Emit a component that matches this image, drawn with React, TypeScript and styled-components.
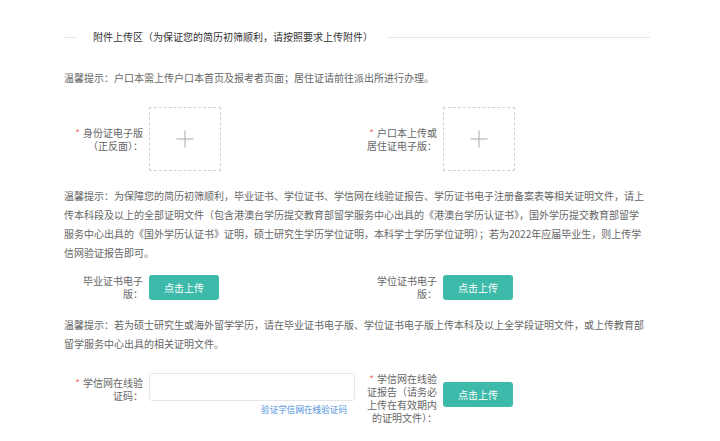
import React from "react";
import styled, { createGlobalStyle } from "styled-components";

const GlobalStyle = createGlobalStyle`
  html, body { margin: 0; padding: 0; background: #fff; }
  body { font-family: "Noto Sans CJK SC", "Noto Sans", sans-serif; }
`;

const Page = styled.div`
  padding: 27px 0 20px 63px;
  width: 587px;
`;

const Header = styled.div`
  display: flex;
  align-items: center;
  height: 20px;
`;

const HeaderLine = styled.div<{ $grow?: boolean }>`
  height: 1px;
  background: #e6e6e6;
  width: ${(p) => (p.$grow ? "auto" : "14px")};
  flex: ${(p) => (p.$grow ? "1" : "none")};
`;

const Title = styled.div`
  margin: 0 14px 0 16px;
  font-size: 10px;
  line-height: 20px;
  color: #333;
  white-space: nowrap;
`;

const Hint = styled.div<{ $mt: number }>`
  margin-top: ${(p) => p.$mt}px;
  padding-left: 1px;
  font-size: 10px;
  line-height: 19px;
  color: #666;
  white-space: nowrap;
`;

const Row = styled.div<{ $mt: number }>`
  display: grid;
  grid-template-columns: 294px 293px;
  margin-top: ${(p) => p.$mt}px;
`;

const Item = styled.div<{ $align?: string }>`
  display: flex;
  align-items: ${(p) => p.$align || "center"};
`;

const Label = styled.div<{ $mt?: number; $required?: boolean }>`
  box-sizing: border-box;
  width: 86px;
  flex: none;
  padding: 0 6px 0 8px;
  margin-top: ${(p) => p.$mt || 0}px;
  text-align: right;
  font-size: 10px;
  line-height: 13px;
  color: #666;

  &::before {
    content: ${(p) => (p.$required ? '"*"' : "none")};
    color: #f36d6d;
    margin-right: 3px;
  }
`;

const UploadBox = styled.div`
  box-sizing: border-box;
  width: 72px;
  height: 64px;
  border: 1px dashed #d2d2d2;
  display: flex;
  align-items: center;
  justify-content: center;
`;

const UploadButton = styled.button<{ $mt?: number }>`
  width: 70px;
  height: 25px;
  margin-top: ${(p) => p.$mt || 0}px;
  padding: 0;
  border: none;
  border-radius: 3px;
  background: #3dbaa9;
  color: #fff;
  font-family: inherit;
  font-size: 10px;
  cursor: pointer;
`;

const InputWrap = styled.div`
  display: flex;
  flex-direction: column;
  margin-top: 1px;
`;

const CodeInput = styled.input`
  box-sizing: border-box;
  width: 206px;
  height: 28px;
  border: 1px solid #e6e6e6;
  border-radius: 3px;
  outline: none;
`;

const VerifyLink = styled.a`
  align-self: flex-end;
  margin: 2px 8px 0 0;
  font-size: 8.6px;
  line-height: 12px;
  color: #4d8fdb;
  text-decoration: none;
  white-space: nowrap;
`;

const Plus = () => (
  <svg width="18" height="18" viewBox="0 0 18 18">
    <path d="M9 0.5V17.5M0.5 9H17.5" stroke="#a8a8a8" strokeWidth="1" fill="none" />
  </svg>
);

export default function App() {
  return (
    <>
      <GlobalStyle />
      <Page>
        <Header>
          <HeaderLine />
          <Title>附件上传区（为保证您的简历初筛顺利，请按照要求上传附件）</Title>
          <HeaderLine $grow />
        </Header>

        <Hint $mt={21}>温馨提示：户口本需上传户口本首页及报考者页面；居住证请前往派出所进行办理。</Hint>

        <Row $mt={20}>
          <Item>
            <Label $required>身份证电子版（正反面）：</Label>
            <UploadBox>
              <Plus />
            </UploadBox>
          </Item>
          <Item>
            <Label $required>户口本上传或居住证电子版：</Label>
            <UploadBox>
              <Plus />
            </UploadBox>
          </Item>
        </Row>

        <Hint $mt={15}>
          温馨提示：为保障您的简历初筛顺利，毕业证书、学位证书、学信网在线验证报告、学历证书电子注册备案表等相关证明文件，请上
          <br />
          传本科段及以上的全部证明文件（包含港澳台学历提交教育部留学服务中心出具的《港澳台学历认证书》，国外学历提交教育部留学
          <br />
          服务中心出具的《国外学历认证书》证明，硕士研究生学历学位证明，本科学士学历学位证明）；若为2022年应届毕业生，则上传学
          <br />
          信网验证报告即可。
        </Hint>

        <Row $mt={12}>
          <Item>
            <Label>毕业证书电子版：</Label>
            <UploadButton>点击上传</UploadButton>
          </Item>
          <Item>
            <Label>学位证书电子版：</Label>
            <UploadButton>点击上传</UploadButton>
          </Item>
        </Row>

        <Hint $mt={15}>
          温馨提示：若为硕士研究生或海外留学学历，请在毕业证书电子版、学位证书电子版上传本科及以上全学段证明文件，或上传教育部
          <br />
          留学服务中心出具的相关证明文件。
        </Hint>

        <Row $mt={19}>
          <Item $align="flex-start">
            <Label $mt={4} $required>
              学信网在线验证码：
            </Label>
            <InputWrap>
              <CodeInput />
              <VerifyLink href="#">验证学信网在线验证码</VerifyLink>
            </InputWrap>
          </Item>
          <Item $align="flex-start">
            <Label $required>学信网在线验证报告（请务必上传在有效期内的证明文件）：</Label>
            <UploadButton $mt={10}>点击上传</UploadButton>
          </Item>
        </Row>
      </Page>
    </>
  );
}
